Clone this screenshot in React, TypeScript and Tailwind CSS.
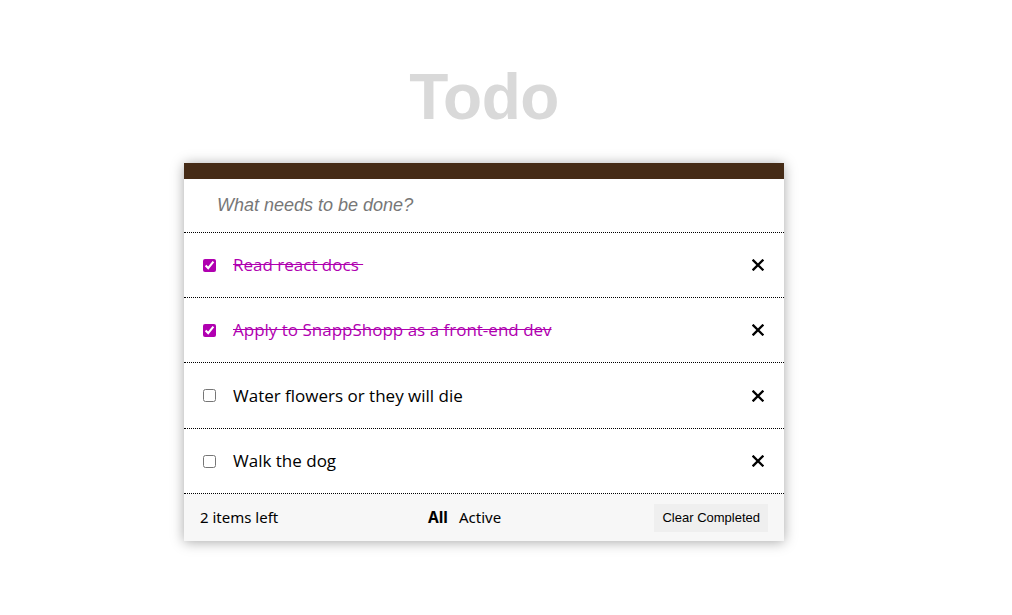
import React from "react";

const items = [
  { text: "Read react docs ", done: true, h: "h-[65px]" },
  { text: "Apply to SnappShopp as a front-end dev", done: true, h: "h-[65px]" },
  { text: "Water flowers or they will die", done: false, h: "h-[66px]" },
  { text: "Walk the dog", done: false, h: "h-[65px]" },
];

function XIcon() {
  return (
    <svg width="12" height="12" viewBox="0 0 12 12" className="block">
      <path d="M1.5 1.5 L10.5 10.5 M10.5 1.5 L1.5 10.5" stroke="#000" strokeWidth="2.3" strokeLinecap="square" />
    </svg>
  );
}

export default function App() {
  return (
    <div className="w-[968px] min-h-[615px] bg-white flex flex-col items-center">
      <h1 className="mt-[60px] text-[64px] leading-[74px] font-bold text-[#d9d9d9] tracking-[-0.5px] font-['Liberation_Sans',Arial,sans-serif]">
        Todo
      </h1>
      <div className="mt-[29px] w-[600px] bg-white shadow-[0_1px_12px_rgba(0,0,0,0.35)]">
        <div className="h-[16px] bg-[#452b16]" />
        <div className="h-[54px] border-b border-dotted border-black flex items-center pl-[33px]">
          <span className="italic text-[18px] text-[#777] font-['Liberation_Sans',Arial,sans-serif]">
            What needs to be done?
          </span>
        </div>
        {items.map((it, i) => (
          <div
            key={i}
            className={
              it.h +
              " border-b border-dotted border-black flex items-center pl-[19px] pr-[20px]"
            }
          >
            <input
              type="checkbox"
              defaultChecked={it.done}
              className="w-[13px] h-[13px] m-0 accent-[#b000b0]"
            />
            <span
              className={
                "ml-[17px] flex-1 whitespace-pre text-[17px] font-['Open_Sans',sans-serif] " +
                (it.done ? "text-[#b000b0] line-through" : "text-black")
              }
            >
              {it.text}
            </span>
            <XIcon />
          </div>
        ))}
        <div className="h-[47px] bg-[#f7f7f7] flex items-center pl-[16px] pr-[16px] font-['Noto_Sans',sans-serif] text-[15px] text-black">
          <span className="w-[228px]">2 items left</span>
          <span className="font-bold text-[15.5px]">All</span>
          <span className="ml-[11px]">Active</span>
          <span className="flex-1" />
          <button className="h-[28px] px-[8px] bg-[#efefef] text-[13px] font-['Liberation_Sans',Arial,sans-serif] text-black">
            Clear Completed
          </button>
        </div>
      </div>
    </div>
  );
}
